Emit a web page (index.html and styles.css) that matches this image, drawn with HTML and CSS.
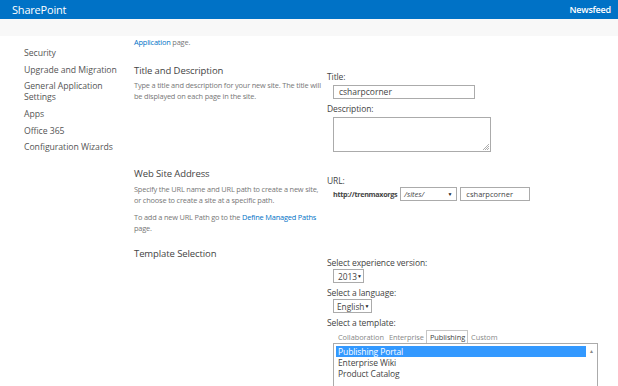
FILE: index.html
```html
<!DOCTYPE html>
<html>
<head>
<meta charset="utf-8">
<link rel="stylesheet" href="styles.css">
</head>
<body>
<header class="suitebar">
  <span class="brand">SharePoint</span>
  <span class="newsfeed">Newsfeed</span>
</header>
<div class="ribbon"></div>
<div class="main">
  <nav class="leftnav">
    <div class="nav-item">Security</div>
    <div class="nav-item">Upgrade and Migration</div>
    <div class="nav-item">General Application<br>Settings</div>
    <div class="nav-item">Apps</div>
    <div class="nav-item">Office 365</div>
    <div class="nav-item">Configuration Wizards</div>
  </nav>
  <div class="content">
    <div class="row row-first">
      <div class="desc"><p class="text"><a class="link">Application</a> page.</p></div>
    </div>
    <div class="row row-title">
      <div class="desc">
        <h3 class="heading">Title and Description</h3>
        <p class="text">Type a title and description for your new site. The title will be displayed on each page in the site.</p>
      </div>
      <div class="fields fields-title">
        <div class="label">Title:</div>
        <div class="input title-input">csharpcorner</div>
        <div class="label">Description:</div>
        <div class="textarea"><svg class="grip" width="6" height="6" viewBox="0 0 6 6"><path d="M6 0L0 6M6 2L2 6M6 4L4 6" stroke="#999" stroke-width="0.8"/></svg></div>
      </div>
    </div>
    <div class="row row-url">
      <div class="desc">
        <h3 class="heading">Web Site Address</h3>
        <p class="text">Specify the URL name and URL path to create a new site, or choose to create a site at a specific path.</p>
        <p class="text para2">To add a new URL Path go to the <a class="link">Define Managed Paths</a> page.</p>
      </div>
      <div class="fields fields-url">
        <div class="label">URL:</div>
        <div class="url-line">
          <span class="prefix">http://trenmaxorgs</span>
          <span class="select sites">/sites/<span class="arrow">▼</span></span>
          <span class="input url-input">csharpcorner</span>
        </div>
      </div>
    </div>
    <div class="row row-template">
      <div class="desc">
        <h3 class="heading">Template Selection</h3>
      </div>
      <div class="fields fields-template">
        <div class="label">Select experience version:</div>
        <div class="select ver">2013<span class="arrow">▼</span></div>
        <div class="label">Select a language:</div>
        <div class="select lang">English<span class="arrow">▼</span></div>
        <div class="label">Select a template:</div>
        <div class="tabs">
          <span class="tab">Collaboration</span>
          <span class="tab">Enterprise</span>
          <span class="tab active">Publishing</span>
          <span class="tab">Custom</span>
        </div>
        <div class="listbox">
          <div class="options">
            <div class="opt selected">Publishing Portal</div>
            <div class="opt">Enterprise Wiki</div>
            <div class="opt">Product Catalog</div>
          </div>
          <div class="scroll"><span class="up">▲</span></div>
        </div>
      </div>
    </div>
  </div>
</div>
</body>
</html>
```
FILE: styles.css
```css
* { box-sizing: border-box; }
html, body { margin: 0; padding: 0; background: #fff; overflow: hidden; }
body {
  font-family: "Open Sans", "Liberation Sans", sans-serif;
  color: #444;
  width: 618px;
  height: 386px;
}
.suitebar {
  height: 19px;
  background: #0072c6;
  display: flex;
  align-items: center;
  justify-content: space-between;
  padding: 0 7px 0 12px;
  color: #fff;
}
.brand { font-size: 11px; letter-spacing: -0.2px; }
.newsfeed { font-size: 9px; font-weight: 600; letter-spacing: -0.2px; }
.ribbon { height: 17px; background: #f8f8f8; }
.main { display: flex; }
.leftnav {
  width: 134px;
  padding: 12px 0 0 24px;
  font-size: 8.7px;
  color: #555;
}
.nav-item { line-height: 11px; margin-bottom: 5.7px; letter-spacing: -0.05px; }
.content { flex: 1; }
.row { display: flex; }
.desc { width: 193px; }
.fields { flex: 1; }
.heading { font-size: 9.5px; font-weight: normal; color: #444; margin: 0; line-height: 12px; letter-spacing: -0.1px; }
.text { font-size: 7.4px; color: #777; margin: 0; line-height: 11px; letter-spacing: -0.18px; }
.link { color: #0072c6; }
.row-first .text { margin-top: 1px; }
.row-title { margin-top: 17px; }
.row-title .text { margin-top: 3px; }
.fields-title { padding-top: 6px; }
.label { font-size: 8.5px; color: #444; line-height: 11px; letter-spacing: -0.1px; }
.input {
  border: 1px solid #ababab;
  font-size: 8.5px;
  color: #444;
  background: #fff;
}
.title-input { width: 142px; height: 14px; margin: 3px 0 4px 6px; padding: 0 5px; line-height: 12px; }
.textarea {
  width: 158px; height: 35px; margin: 3px 0 0 6px;
  border: 1px solid #ababab;
  display: flex; align-items: flex-end; justify-content: flex-end;
  padding: 1px;
}
.grip { display: block; }
.row-url { margin-top: 16px; }
.row-url .text { margin-top: 4px; }
.row-url .para2 { margin-top: 6px; }
.fields-url { padding-top: 7px; }
.url-line { display: flex; align-items: center; margin: 1px 0 0 6px; gap: 3px; font-size: 7.5px; }
.prefix { font-weight: bold; color: #444; font-size: 7.2px; letter-spacing: -0.3px; }
.select {
  border: 1px solid #ababab;
  font-size: 8px;
  color: #444;
  display: inline-flex;
  align-items: center;
  justify-content: space-between;
  background: #fff;
}
.arrow { font-size: 5px; color: #222; }
.sites { width: 57px; height: 14px; padding: 0 4px 0 3px; font-style: italic; font-size: 7.5px; }
.url-input { width: 70px; height: 14px; padding: 0 5px; line-height: 12px; font-size: 7.5px; }
.row-template { margin-top: 14px; }
.fields-template { padding-top: 9px; }
.ver { width: 31px; height: 14px; margin: 1px 0 4px 6px; padding: 0 4px 0 4px; display: flex; font-size: 8.3px; }
.lang { width: 39px; height: 14px; margin: 1px 0 4px 6px; padding: 0 4px 0 3px; display: flex; font-size: 8.3px; }
.tabs { display: flex; margin: 2px 0 0 8px; height: 13px; align-items: flex-end; }
.tab { font-size: 7.4px; color: #888; padding: 0 2px 0 3px; line-height: 12px; letter-spacing: -0.05px; }
.tab.active { color: #444; border: 1px solid #c6c6c6; border-bottom: none; background: #fff; line-height: 12px; }
.listbox {
  margin-left: 6px;
  width: 265px;
  height: 50px;
  border: 1px solid #ababab;
  border-bottom: none;
  display: flex;
  padding: 2px 0 0 2px;
}
.options { width: 250px; }
.opt { font-size: 8.5px; color: #444; line-height: 11px; padding-left: 2px; letter-spacing: -0.1px; }
.opt.selected { background: #3399ff; color: #fff; }
.scroll { flex: 1; display: flex; justify-content: center; }
.up { font-size: 5px; color: #888; margin-top: 2px; }
```
